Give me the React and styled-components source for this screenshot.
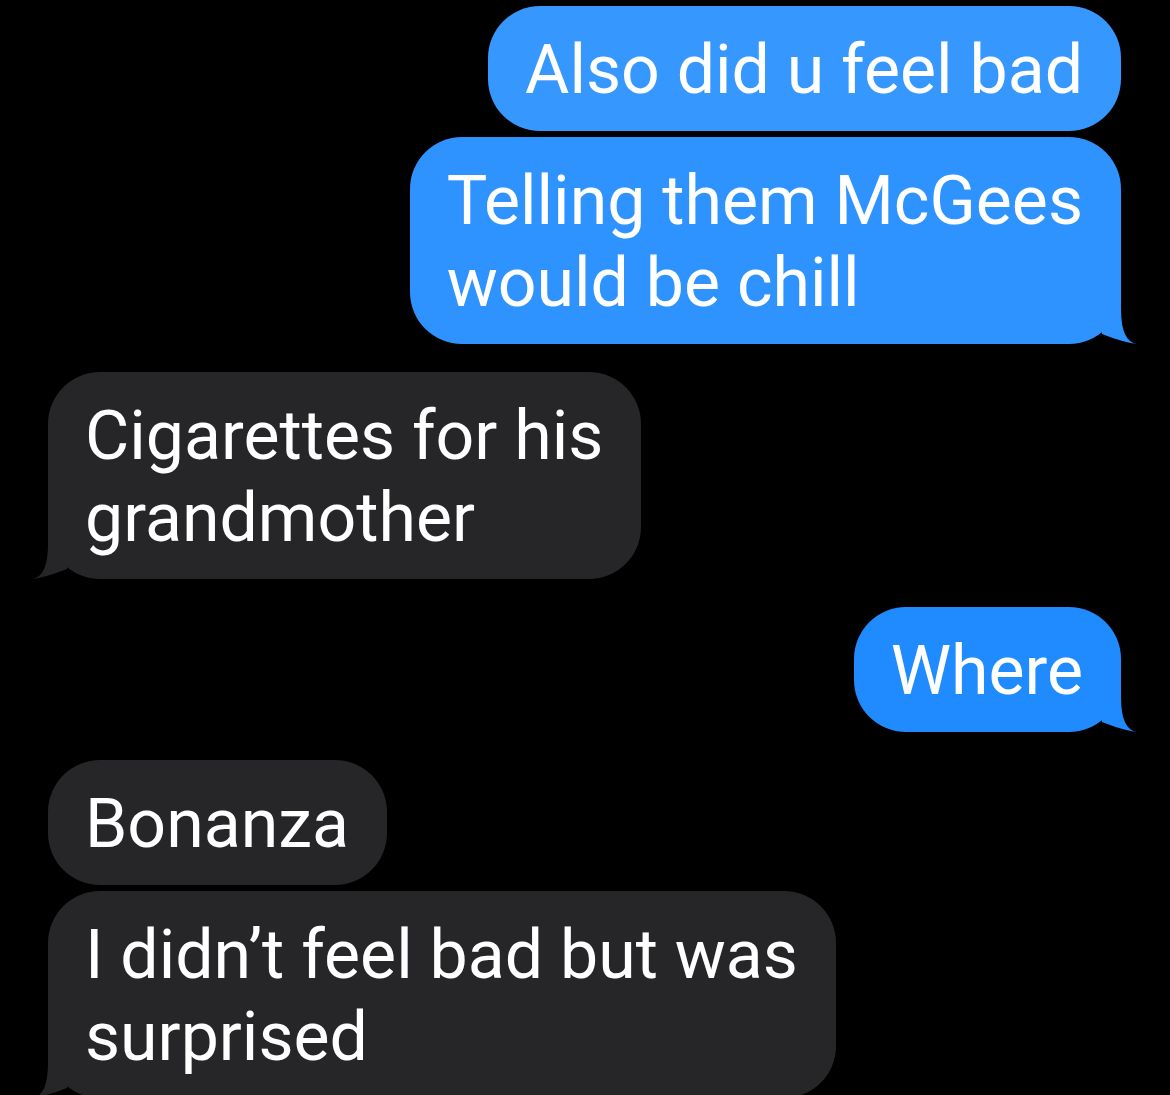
import React from 'react';
import styled, { createGlobalStyle } from 'styled-components';

const GlobalStyle = createGlobalStyle`
  html, body {
    margin: 0;
    padding: 0;
    background: #000000;
    overflow: hidden;
  }
`

const Thread = styled.div`
  display: flex;
  flex-direction: column;
  padding: 6px 49px 0 48px;
  height: 1095px;
  box-sizing: border-box;
  background: #000000;
  font-family: Roboto, "Noto Sans", sans-serif;
`

const Group = styled.div`
  display: flex;
  flex-direction: column;
  align-items: ${p => (p.$mine ? 'flex-end' : 'flex-start')};
  gap: 6px;
  margin-bottom: 28px;
`

const Bubble = styled.div`
  position: relative;
  padding: 23px 38px 20px 37px;
  border-radius: 52px;
  background: ${p => p.$bg};
  color: #ffffff;
  font-size: 68px;
  line-height: 82px;
  white-space: nowrap;
`

const TailSvg = styled.svg`
  position: absolute;
  bottom: 0;
  width: 60px;
  height: 52px;
  ${p => (p.$mine ? 'right: -16px;' : 'left: -16px; transform: scaleX(-1);')}
`

function Tail({ mine, color }) {
  return (
    <TailSvg $mine={mine} viewBox="0 0 60 52">
      <path d="M18 0 L44 0 L44 17 Q44 50 60 52 Q45 50 25 42 L18 0 Z" fill={color} />
    </TailSvg>
  );
}

function Message({ mine, bg, tail, children }) {
  return (
    <Bubble $bg={bg}>
      {children}
      {tail && <Tail mine={mine} color={bg} />}
    </Bubble>
  );
}

const GRAY = '#262628';

export default function App() {
  return (
    <>
      <GlobalStyle />
      <Thread>
        <Group $mine>
          <Message mine bg="#3697ff">Also did u feel bad</Message>
          <Message mine bg="#2f93ff" tail>
            Telling them McGees<br />would be chill
          </Message>
        </Group>
        <Group>
          <Message bg={GRAY} tail>
            Cigarettes for his<br />grandmother
          </Message>
        </Group>
        <Group $mine>
          <Message mine bg="#1f8bff" tail>Where</Message>
        </Group>
        <Group>
          <Message bg={GRAY}>Bonanza</Message>
          <Message bg={GRAY} tail>
            I didn’t feel bad but was<br />surprised
          </Message>
        </Group>
      </Thread>
    </>
  );
}
